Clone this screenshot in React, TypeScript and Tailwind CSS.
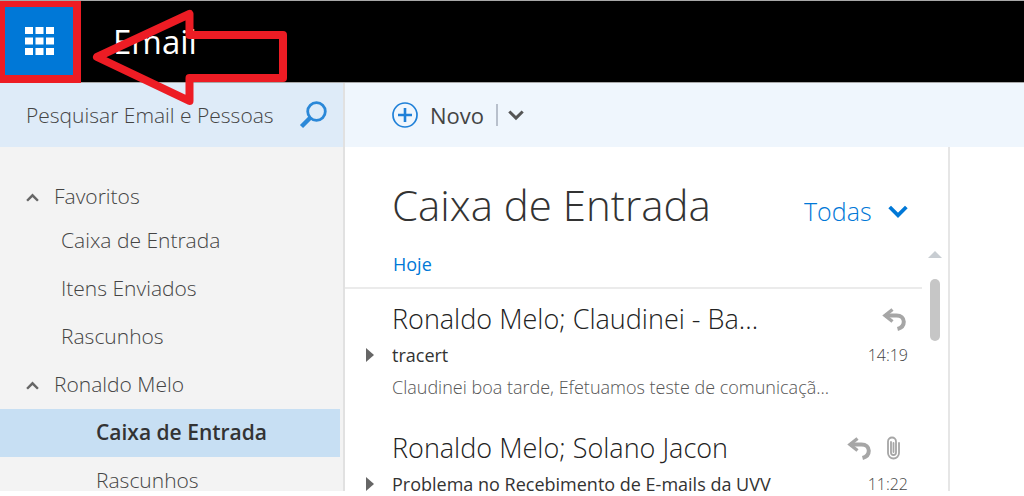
import React, { useState } from 'react';

interface Message {
  id: number;
  sender: string;
  subject: string;
  preview: string;
  time: string;
  hasAttachment: boolean;
}

interface FolderGroup {
  name: string;
  folders: string[];
}

const messages: Message[] = [
  {
    id: 1,
    sender: 'Ronaldo Melo; Claudinei - Ba...',
    subject: 'tracert',
    preview: 'Claudinei boa tarde, Efetuamos teste de comunicaçã...',
    time: '14:19',
    hasAttachment: false
  },
  {
    id: 2,
    sender: 'Ronaldo Melo; Solano Jacon',
    subject: 'Problema no Recebimento de E-mails da UVV',
    preview: '',
    time: '11:22',
    hasAttachment: true
  }
];

const favorites: FolderGroup = {
  name: 'Favoritos',
  folders: ['Caixa de Entrada', 'Itens Enviados', 'Rascunhos']
};

const mailbox: FolderGroup = {
  name: 'Ronaldo Melo',
  folders: ['Caixa de Entrada', 'Rascunhos']
};

function Chevron({ className, up = false }: { className: string; up?: boolean }) {
  return (
    <svg viewBox="0 0 18 12" fill="none" stroke="currentColor" strokeWidth="3.4" className={className} aria-hidden="true">
      <path d={up ? 'M1.5 10.5 9 3l7.5 7.5' : 'M1.5 1.5 9 9l7.5-7.5'} />
    </svg>
  );
}

function ReplyIcon() {
  return (
    <svg viewBox="0 0 24 23" className="w-6 h-[23px] text-[#a6a6a6]" fill="none" stroke="currentColor" aria-label="Respondido">
      <path d="M10.5 1.5 3 7.500l7.500 6" strokeWidth="3.400" />
      <path d="M3 7.500h11.500c4.500 0 7.300 2.400 7.300 6.300 0 3.600-2.300 6.200-6.300 7.200" strokeWidth="4" />
    </svg>
  );
}

function ClipIcon() {
  return (
    <svg viewBox="0 0 13 24" className="w-[13px] h-6 text-[#a6a6a6]" fill="none" stroke="currentColor" strokeWidth="1.8" strokeLinecap="round" aria-label="Anexo">
      <path d="M4 6v10.500a2.500 2.500 0 0 0 5 0V5.500a4 4 0 0 0-4-4 4 4 0 0 0-4 4V17a5.500 5.500 0 0 0 11 0V7" />
      <path d="M6.500 7v9" />
    </svg>
  );
}

function Header() {
  return (
    <header className="relative flex items-center h-[83px] shrink-0 bg-black border-t border-b border-[#a8a8a8]">
      <button aria-label="Aplicativos" className="flex items-center justify-center w-[81px] h-[82px] -my-px shrink-0 bg-[#0078d7] border-[5px] border-t-[6px] border-b-8 border-r-8 border-[#ed1c24]">
        <svg viewBox="0 0 29 28" className="w-[29px] h-7" fill="white" aria-hidden="true">
          {[0, 10.5, 21].map(y =>
            [0, 10.5, 21].map(x => <rect key={`${x}-${y}`} x={x} y={y} width="8" height="7" />)
          )}
        </svg>
      </button>
      <h1 className="ml-8 text-[33px] leading-10 text-white">Email</h1>
      <svg viewBox="0 0 200 100" className="absolute left-[90px] top-[7px] w-[200px] h-[100px] z-10 pointer-events-none" fill="none" stroke="#ed1c24" strokeWidth="8" strokeLinejoin="round" aria-hidden="true">
        <path d="M7 49 99.500 6V27H193V70H99.500V93Z" />
      </svg>
    </header>
  );
}

function SearchBox() {
  return (
    <form className="flex items-center h-16 shrink-0 pl-[26px] pr-4 bg-[#deebf8]" onSubmit={e => e.preventDefault()}>
      <input
        type="search"
        aria-label="Pesquisar Email e Pessoas"
        placeholder="Pesquisar Email e Pessoas"
        className="flex-1 min-w-0 h-10 bg-transparent text-[21px] font-light outline-none placeholder:text-[#444444]"
      />
      <button aria-label="Pesquisar" className="text-[#2b88d8]">
        <svg viewBox="0 0 28 28" className="w-7 h-7" fill="none" stroke="currentColor" aria-hidden="true">
          <circle cx="17.500" cy="10.500" r="8.800" strokeWidth="2.800" />
          <path d="M11 17 2.500 25.500" strokeWidth="4.500" />
        </svg>
      </button>
    </form>
  );
}

function GroupHeading({ name, className }: { name: string; className: string }) {
  return (
    <button className={`flex items-center w-full pl-[26px] text-[21px] font-light ${className}`}>
      <Chevron up className="w-[13px] h-[9px] mr-[15px] text-[#666666]" />
      {name}
    </button>
  );
}

function Sidebar() {
  return (
    <aside className="flex flex-col w-[345px] shrink-0 bg-[#f3f3f3] border-r-2 border-[#e1e1e1] text-[#444444]">
      <SearchBox />
      <nav className="pt-[30px] pr-[3px]">
        <GroupHeading name={favorites.name} className="h-10" />
        <ul>
          {favorites.folders.map(folder => (
            <li key={folder}>
              <a href="#" className="flex items-center h-12 pl-[61px] text-[21px] font-light">{folder}</a>
            </li>
          ))}
        </ul>
        <GroupHeading name={mailbox.name} className="h-12" />
        <ul>
          {mailbox.folders.map((folder, index) => (
            <li key={folder}>
              <a
                href="#"
                className={`flex items-center h-12 pl-24 text-[21px] ${index === 0 ? 'bg-[#c7dff3] font-semibold text-[#333333]' : 'font-light'}`}
              >
                {folder}
              </a>
            </li>
          ))}
        </ul>
      </nav>
    </aside>
  );
}

function Toolbar() {
  return (
    <div className="flex items-center h-16 shrink-0 pl-[47px] bg-[#eff6fd] text-[#444444]">
      <button className="flex items-center text-[22px]">
        <svg viewBox="0 0 26 26" className="w-[26px] h-[26px] mr-3 text-[#1f80d8]" fill="none" stroke="currentColor" aria-hidden="true">
          <circle cx="13" cy="13" r="12" strokeWidth="1.700" />
          <path d="M13 6v14M6 13h14" strokeWidth="2.600" />
        </svg>
        Novo
      </button>
      <span className="w-0.5 h-[22px] ml-3 mr-2.5 bg-[#b8c0cc]" />
      <button aria-label="Mais opções">
        <Chevron className="w-4 h-[11px] text-[#555555]" />
      </button>
    </div>
  );
}

function MessageRow({ message }: { message: Message }) {
  return (
    <li className="pt-3.5 pb-[19px] pl-[47px] pr-3.5">
      <div className="flex items-center justify-between h-8">
        <h3 className="text-[27px] leading-8 font-light text-[#222222] whitespace-nowrap">{message.sender}</h3>
        <div className="flex items-center gap-4 pr-0.5">
          <ReplyIcon />
          {message.hasAttachment && <span className="pr-1.5"><ClipIcon /></span>}
        </div>
      </div>
      <div className="flex items-center h-10 -ml-[26px]">
        <svg viewBox="0 0 8 14" className="w-2 h-3.5 mr-[18px] shrink-0" fill="#666666" aria-hidden="true">
          <path d="M0 0 8 7 0 14Z" />
        </svg>
        <p className="w-[384px] overflow-hidden whitespace-nowrap text-lg text-[#333333]">{message.subject}</p>
        <time className="ml-auto text-base font-light text-[#444444]">{message.time}</time>
      </div>
      <p className="h-6 text-lg leading-6 font-light text-[#555555] whitespace-nowrap">{message.preview}</p>
    </li>
  );
}

function MessageList() {
  const [filter, setFilter] = useState('Todas');

  return (
    <section className="flex flex-col w-[605px] shrink-0 border-r-2 border-[#e6e6e6]">
      <div className="flex items-baseline justify-between h-[94px] pt-7 pl-[47px] pr-10 shrink-0">
        <h2 className="text-[42px] leading-[60px] font-light text-[#333333]">Caixa de Entrada</h2>
        <div className="relative text-[#0078d7]">
          <select
            aria-label="Filtro"
            value={filter}
            onChange={e => setFilter(e.target.value)}
            className="appearance-none bg-transparent pr-9 text-[25px] font-light outline-none"
          >
            <option>Todas</option>
          </select>
          <Chevron className="absolute right-0 top-3 w-5 h-[14px] pointer-events-none" />
        </div>
      </div>
      <div className="flex flex-1 min-h-0">
        <div className="flex-1 min-w-0">
          <h3 className="flex items-center h-12 pl-12 border-b-2 border-[#ebebeb] text-lg text-[#0078d7]">Hoje</h3>
          <ul>
            {messages.map(message => (
              <MessageRow key={message.id} message={message} />
            ))}
          </ul>
        </div>
        <div className="flex flex-col items-center w-[26px] pt-2.5 shrink-0">
          <svg viewBox="0 0 14 7" className="w-3.5 h-[7px]" fill="#c8cdd2" aria-hidden="true">
            <path d="M0 7 7 0l7 7Z" />
          </svg>
          <div className="w-2.5 h-[62px] mt-[21px] rounded-full bg-[#c6c6c6]" />
        </div>
      </div>
    </section>
  );
}

export default function App() {
  return (
    <div className="flex flex-col h-screen pb-[5px] overflow-hidden bg-white font-['Open_Sans',sans-serif]">
      <Header />
      <div className="flex flex-1 min-h-0 overflow-hidden">
        <Sidebar />
        <main className="flex flex-col flex-1 min-w-0">
          <Toolbar />
          <div className="flex flex-1 min-h-0">
            <MessageList />
          </div>
        </main>
      </div>
    </div>
  );
}
